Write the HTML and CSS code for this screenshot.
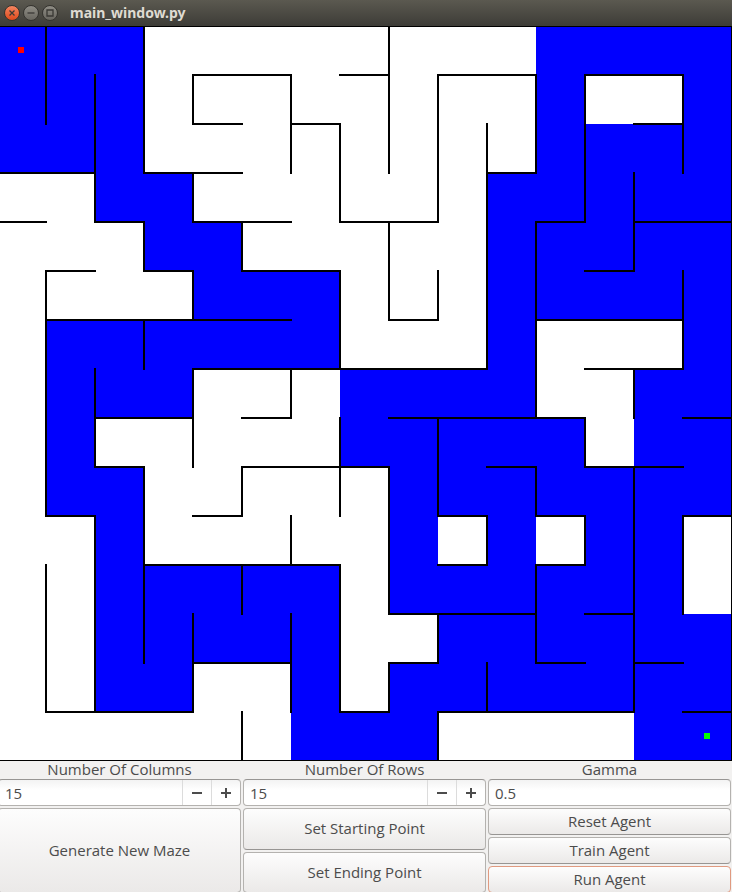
FILE: index.html
```html
<!DOCTYPE html>
<html lang="en">
<head>
<meta charset="utf-8">
<title>main_window.py</title>
<link rel="stylesheet" href="styles.css">
</head>
<body>
<header class="titlebar">
  <div class="window-buttons">
    <button class="window-button close" type="button" aria-label="Close">
      <svg viewBox="0 0 16 16"><path d="M5.5 5.5l5 5M10.5 5.5l-5 5"/></svg>
    </button>
    <button class="window-button" type="button" aria-label="Minimize">
      <svg viewBox="0 0 16 16"><path d="M4.500 8h7"/></svg>
    </button>
    <button class="window-button" type="button" aria-label="Maximize">
      <svg viewBox="0 0 16 16"><path d="M5 5h6v6H5z"/></svg>
    </button>
  </div>
  <h1 class="title">main_window.py</h1>
</header>

<main>
  <svg class="maze" viewBox="3 0 732 735" role="img" aria-label="Maze">
    <!-- Visited cells, one line per row, in cell units -->
    <path class="visited" transform="scale(49)" d="
      M0 0h3v1h-3z M11 0h4v1h-4z
      M0 1h3v1h-3z M11 1h1v1h-1z M14 1h1v1h-1z
      M0 2h3v1h-3z M11 2h4v1h-4z
      M2 3h2v1h-2z M10 3h5v1h-5z
      M3 4h2v1h-2z M10 4h5v1h-5z
      M4 5h3v1h-3z M10 5h5v1h-5z
      M1 6h6v1h-6z M10 6h1v1h-1z M14 6h1v1h-1z
      M1 7h3v1h-3z M7 7h4v1h-4z M13 7h2v1h-2z
      M1 8h1v1h-1z M7 8h5v1h-5z M13 8h2v1h-2z
      M1 9h2v1h-2z M8 9h7v1h-7z
      M2 10h1v1h-1z M8 10h1v1h-1z M10 10h1v1h-1z M12 10h2v1h-2z
      M2 11h5v1h-5z M8 11h6v1h-6z
      M2 12h5v1h-5z M9 12h6v1h-6z
      M2 13h2v1h-2z M6 13h1v1h-1z M8 13h7v1h-7z
      M6 14h3v1h-3z M13 14h2v1h-2z"/>
    <!-- Vertical walls, one line per column edge -->
    <path class="wall" transform="scale(49)" d="
      M1 0V2M1 5V10M1 11V14
      M2 1V4M2 7V9M2 10V14
      M3 0V3M3 4V5M3 6V7M3 9V13
      M4 1V2M4 3V4M4 5V6M4 7V9M4 12V14
      M5 4V5M5 9V10M5 11V12M5 14V15
      M6 1V3M6 7V8M6 10V11M6 12V14
      M7 2V4M7 5V7M7 8V10M7 11V14
      M8 0V3M8 4V6M8 9V12M8 13V14
      M9 1V4M9 5V6M9 8V10M9 12V13M9 14V15
      M10 2V7M10 10V11M10 13V14
      M11 1V3M11 4V8M11 9V10M11 11V13
      M12 1V4M12 8V9M12 10V11
      M13 3V5M13 7V8M13 9V14
      M14 1V3M14 5V7M14 10V12"/>
    <!-- Horizontal walls, one line per row edge -->
    <path class="wall" transform="scale(49)" d="
      M4 1H6M7 1H8M9 1H11M12 1H14
      M4 2H5M6 2H7M13 2H14
      M0 3H2M3 3H5M10 3H11
      M0 4H1M2 4H3M4 4H6M7 4H9M11 4H12M13 4H15
      M1 5H2M3 5H4M5 5H7M12 5H13
      M1 6H6M8 6H9M11 6H14
      M4 7H10M12 7H14
      M2 8H4M5 8H6M8 8H12M14 8H15
      M2 9H3M5 9H8M10 9H11M12 9H14
      M1 10H2M4 10H5M9 10H10M11 10H12M14 10H15
      M3 11H7M9 11H10M11 11H12
      M8 12H11M12 12H13
      M4 13H6M8 13H9M11 13H12M13 13H14
      M1 14H4M7 14H8M9 14H13M14 14H15"/>
    <path class="wall" transform="scale(49)" d="M0 0H15V15H0z"/>
    <rect class="start" x="21" y="21" width="6" height="6"/>
    <rect class="end" x="707" y="707" width="6" height="6"/>
  </svg>

  <form class="controls">
    <div class="column">
      <label for="columns">Number Of Columns</label>
      <div class="field">
        <input id="columns" type="text" inputmode="numeric" value="15">
        <button class="step" type="button" aria-label="Fewer columns"><svg viewBox="0 0 12 12"><path d="M1 6h10"/></svg></button>
        <button class="step" type="button" aria-label="More columns"><svg viewBox="0 0 12 12"><path d="M1 6h10M6 1v10"/></svg></button>
      </div>
      <div class="actions">
        <button class="action" type="button">Generate New Maze</button>
      </div>
    </div>
    <div class="column">
      <label for="rows">Number Of Rows</label>
      <div class="field">
        <input id="rows" type="text" inputmode="numeric" value="15">
        <button class="step" type="button" aria-label="Fewer rows"><svg viewBox="0 0 12 12"><path d="M1 6h10"/></svg></button>
        <button class="step" type="button" aria-label="More rows"><svg viewBox="0 0 12 12"><path d="M1 6h10M6 1v10"/></svg></button>
      </div>
      <div class="actions">
        <button class="action" type="button">Set Starting Point</button>
        <button class="action" type="button">Set Ending Point</button>
      </div>
    </div>
    <div class="column">
      <label for="gamma">Gamma</label>
      <div class="field">
        <input id="gamma" type="text" inputmode="decimal" value="0.5">
      </div>
      <div class="actions">
        <button class="action" type="button">Reset Agent</button>
        <button class="action" type="button">Train Agent</button>
        <button class="action focused" type="button">Run Agent</button>
      </div>
    </div>
  </form>
</main>
</body>
</html>
```
FILE: styles.css
```css
* {
  box-sizing: border-box;
}

body {
  margin: 0;
  overflow: hidden;
  background: #f2f1f0;
  color: #4c4c4c;
  font-family: "Open Sans", "Noto Sans", sans-serif;
  font-size: 15px;
}

button,
input {
  margin: 0;
  padding: 0;
  border: 0;
  background: none;
  color: inherit;
  font: inherit;
}

/* Title bar */
.titlebar {
  display: flex;
  align-items: center;
  gap: 12px;
  height: 26px;
  padding: 0 4px;
  background: linear-gradient(#5b5950, #3d3c37);
}

.window-buttons {
  display: flex;
  gap: 3px;
}

.window-button {
  width: 16px;
  height: 16px;
  border: 1px solid #35342f;
  border-radius: 50%;
  background: linear-gradient(#8f8d85, #68665f);
}

.window-button.close {
  background: linear-gradient(#f58560, #dd4a1c);
}

.window-button svg {
  display: block;
  width: 16px;
  height: 16px;
  margin: -1px;
  fill: none;
  stroke: #3a3935;
  stroke-width: 1.3;
}

.title {
  margin: 0;
  color: #dfdbd2;
  font-family: "Noto Sans", "Open Sans", sans-serif;
  font-size: 14px;
  font-weight: 700;
  line-height: 26px;
}

/* Maze */
.maze {
  display: block;
  width: 100%;
  background: #fff;
}

.visited {
  fill: #00f;
  shape-rendering: crispEdges;
}

.wall {
  fill: none;
  stroke: #000;
  stroke-width: 2px;
  stroke-linecap: square;
  vector-effect: non-scaling-stroke;
}

.start {
  fill: #f00;
}

.end {
  fill: #0f0;
}

/* Controls */
.controls {
  display: grid;
  grid-template-columns: repeat(3, 1fr);
  gap: 2px;
  margin: 0 1px 0 -2px;
}

.column {
  display: flex;
  flex-direction: column;
  min-width: 0;
}

.column label {
  padding-bottom: 2px;
  line-height: 16px;
  text-align: center;
}

.field {
  display: flex;
  height: 27px;
  margin-bottom: 2px;
  overflow: hidden;
  border: 1px solid #b4b2af;
  border-top-color: #979593;
  border-radius: 4px;
  background: linear-gradient(#f3f3f3, #fff 40%);
}

.field input {
  flex: 1;
  min-width: 0;
  padding: 0 6px;
  outline: 0;
}

.step {
  display: flex;
  align-items: center;
  justify-content: center;
  width: 29px;
  border-left: 1px solid #dcdcdc;
}

.step svg {
  width: 12px;
  height: 12px;
  fill: none;
  stroke: #4c4c4c;
  stroke-width: 2;
}

.actions {
  display: flex;
  flex: 1;
  flex-direction: column;
  gap: 2px;
}

.action {
  flex: 1 0 auto;
  min-height: 27px;
  border: 1px solid #b4b2af;
  border-bottom-color: #979593;
  border-radius: 4px;
  background: linear-gradient(#fdfdfd, #ebe9e8);
  line-height: 25px;
}

.action.focused {
  border-color: #e09a80;
}
```
